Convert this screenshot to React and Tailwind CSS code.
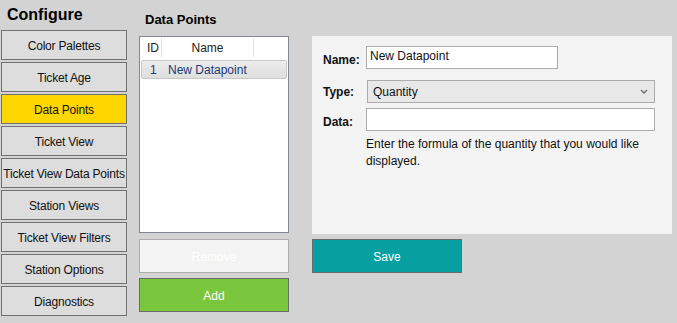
import React from 'react';

const menu = [
  'Color Palettes',
  'Ticket Age',
  'Data Points',
  'Ticket View',
  'Ticket View Data Points',
  'Station Views',
  'Ticket View Filters',
  'Station Options',
  'Diagnostics',
];

function Chevron() {
  return (
    <svg width="8" height="5" viewBox="0 0 8 5" className="block">
      <polyline points="1,1 4,4 7,1" fill="none" stroke="#6d6d6d" strokeWidth="1.4" />
    </svg>
  );
}

export default function App() {
  return (
    <div className="w-[677px] h-[323px] bg-[#d3d3d3] flex font-['Liberation_Sans',Arial,sans-serif] text-[12px] text-[#111] overflow-hidden">
      {/* Sidebar */}
      <div className="w-[128px] pl-[1px] flex flex-col">
        <div className="h-[30px] pl-[6px] pt-[5px] text-[16px] font-bold text-black leading-[20px]">Configure</div>
        <div className="flex flex-col gap-[2px]">
          {menu.map((m, i) => (
            <div
              key={m}
              className={
                'w-[126px] h-[30px] pt-[2px] border border-[#707070] flex items-center justify-center whitespace-nowrap tracking-[-0.2px] ' +
                (i === 2 ? 'bg-[#ffd700]' : 'bg-[#dddddd]')
              }
            >
              {m}
            </div>
          ))}
        </div>
      </div>

      {/* Data points list */}
      <div className="ml-[11px] w-[150px] flex flex-col">
        <div className="h-[36px] pl-[6px] pt-[12px] text-[13px] font-bold text-black leading-[16px]">Data Points</div>
        <div className="h-[197px] bg-white border border-[#828790] px-[1px] pt-[1px]">
          <div className="flex h-[19px] items-center text-[#222]">
            <div className="w-[21px] h-full flex items-center pl-[6px] border-r border-[#e3e3e3]">ID</div>
            <div className="w-[92px] h-full flex items-center justify-center border-r border-[#e3e3e3]">Name</div>
          </div>
          <div className="mt-[3px] h-[19px] rounded-[2px] border border-[#c8c8c8] bg-gradient-to-b from-[#ececec] to-[#dedede] flex items-center text-[#1c3a78]">
            <span className="pl-[8px] w-[26px]">1</span>
            <span>New Datapoint</span>
          </div>
        </div>
        <div className="mt-[6px] h-[34px] pt-[2px] bg-[#f3f3f3] border border-[#adadad] flex items-center justify-center text-white">Remove</div>
        <div className="mt-[5px] h-[34px] pt-[2px] bg-[#7ac63c] border border-[#6a6a6a] flex items-center justify-center text-white">Add</div>
      </div>

      {/* Detail panel */}
      <div className="ml-[23px] w-[360px] pt-[36px] flex flex-col">
        <div className="h-[198px] bg-[#f3f3f3] pl-[11px] pt-[10px]">
          <div className="flex items-center h-[23px]">
            <div className="w-[43px] font-bold pt-[5px]">Name:</div>
            <div className="w-[192px] h-[23px] bg-white border border-[#acacac] pl-[3px] leading-[18px]">New Datapoint</div>
          </div>
          <div className="flex items-center h-[23px] mt-[11px]">
            <div className="w-[44px] font-bold">Type:</div>
            <div className="w-[288px] h-[23px] bg-[#e8e8e8] border border-[#acacac] pl-[5px] pr-[6px] flex items-center justify-between">
              <span>Quantity</span>
              <Chevron />
            </div>
          </div>
          <div className="flex items-center h-[23px] mt-[5px]">
            <div className="w-[43px] font-bold pt-[4px]">Data:</div>
            <div className="w-[289px] h-[23px] bg-white border border-[#acacac]"></div>
          </div>
          <div className="ml-[43px] mt-[5px] leading-[17px] text-[#111]">
            Enter the formula of the quantity that you would like
            <br />
            displayed.
          </div>
        </div>
        <div className="mt-[5px] w-[150px] h-[34px] pt-[2px] bg-[#05a09f] border border-[#6b6b6b] flex items-center justify-center text-white">Save</div>
      </div>
    </div>
  );
}
